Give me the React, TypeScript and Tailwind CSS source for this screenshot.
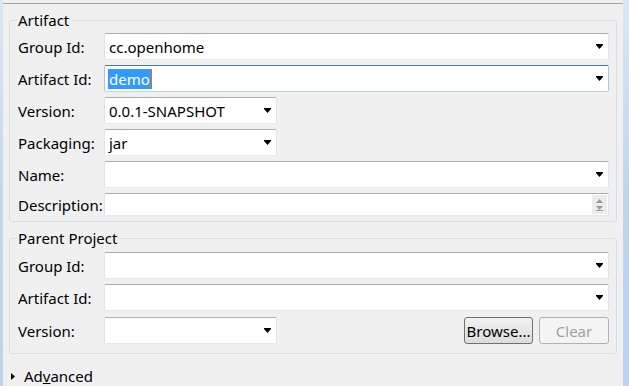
import React from 'react';

const FONT = "font-['Noto_Sans',sans-serif]";

function DropArrow() {
  return (
    <svg width="7" height="5" viewBox="0 0 7 5" className="shrink-0">
      <rect x="0" y="0" width="7" height="1" fill="#000" />
      <polygon points="0,1 7,1 3.5,5" fill="#000" />
    </svg>
  );
}

function SpinArrows() {
  return (
    <div className="flex h-[19px] w-[15px] flex-col items-center justify-center gap-[3px] bg-[#ececec]">
      <svg width="7" height="4" viewBox="0 0 7 4">
        <polygon points="3.5,0 7,4 0,4" fill="#9a9a9a" />
      </svg>
      <svg width="7" height="5" viewBox="0 0 7 5">
        <polygon points="0,0 7,0 3.5,4" fill="#9a9a9a" />
        <rect x="0" y="4" width="7" height="1" fill="#9a9a9a" />
      </svg>
    </div>
  );
}

type ComboProps = {
  value?: string;
  narrow?: boolean;
  focused?: boolean;
  selected?: boolean;
};

function Combo({ value = '', narrow, focused, selected }: ComboProps) {
  const border = focused
    ? 'border-t-[#3d7bad] border-x-[#a4c9e3] border-b-[#b7d9ed]'
    : 'border-t-[#abadb3] border-x-[#e2e3ea] border-b-[#e3e9ef]';
  return (
    <div
      className={`flex h-[27px] items-center rounded-[2px] border bg-white pl-[3px] ${border} ${
        narrow ? 'w-[173px] pr-[5px]' : 'flex-1 pr-[5px]'
      }`}
    >
      <div className="flex-1 truncate text-black">
        {selected ? (
          <span className="inline-flex items-center">
            <span className="bg-[#3399ff] px-[1px] text-white">{value}</span>
            <span className="h-[20px] w-[1px] bg-[#d0722a]" />
          </span>
        ) : (
          <span className="pl-[1px]">{value}</span>
        )}
      </div>
      <DropArrow />
    </div>
  );
}

function Row({ label, children, gap = 'mb-[5px]' }: { label: string; children: React.ReactNode; gap?: string }) {
  return (
    <div className={`flex items-center ${gap}`}>
      <div className="w-[87px] shrink-0 pl-[1px] text-black">{label}</div>
      {children}
    </div>
  );
}

export default function App() {
  return (
    <div className={`flex h-[386px] w-[629px] overflow-hidden bg-[#f0f0f0] text-[15px] leading-[20px] ${FONT}`}>
      {/* left window edge */}
      <div className="w-[3px] bg-gradient-to-b from-[#dbe7f5] via-[#c2d7ef] to-[#bcd3ee]" />

      <div className="flex flex-1 flex-col pt-[3px]">
        <div className="flex flex-1 flex-col border-t border-[#a4a4a4] px-[6px]">
          {/* Artifact */}
          <fieldset className="mt-[7px] min-w-0 rounded-[3px] border border-[#d5dfe5] px-[7px] pt-[4px] pb-[5px]">
            <legend className="px-[1px] leading-[18px] text-black">Artifact</legend>
            <Row label="Group Id:">
              <Combo value="cc.openhome" />
            </Row>
            <Row label="Artifact Id:">
              <Combo value="demo" focused selected />
            </Row>
            <Row label="Version:">
              <Combo value="0.0.1-SNAPSHOT" narrow />
            </Row>
            <Row label="Packaging:">
              <Combo value="jar" narrow />
            </Row>
            <Row label="Name:">
              <Combo />
            </Row>
            <Row label="Description:" gap="">
              <div className="flex h-[23px] flex-1 items-center justify-end rounded-[2px] border border-t-[#abadb3] border-x-[#e2e3ea] border-b-[#e3e9ef] bg-white pr-[1px]">
                <SpinArrows />
              </div>
            </Row>
          </fieldset>

          {/* Parent Project */}
          <fieldset className="mt-[7px] min-w-0 rounded-[3px] border border-[#d5dfe5] px-[7px] pt-[5px] pb-[9px]">
            <legend className="px-[1px] leading-[18px] text-black">Parent Project</legend>
            <Row label="Group Id:">
              <Combo />
            </Row>
            <Row label="Artifact Id:" gap="mb-[6px]">
              <Combo />
            </Row>
            <Row label="Version:" gap="">
              <Combo narrow />
              <div className="flex-1" />
              <button className="h-[27px] w-[69px] rounded-[3px] border border-[#707070] bg-gradient-to-b from-[#f2f2f2] to-[#dcdcdc] text-black">
                Browse...
              </button>
              <button
                disabled
                className="ml-[6px] h-[27px] w-[70px] rounded-[3px] border border-[#adb2b5] bg-[#f4f4f4] text-[#a0a0a0]"
              >
                Clear
              </button>
            </Row>
          </fieldset>

          {/* Advanced */}
          <div className="mt-[13px] flex h-[18px] items-center pl-[2px] text-black">
            <svg width="4" height="7" viewBox="0 0 4 7" className="shrink-0">
              <polygon points="0,0 4,3.5 0,7" fill="#000" />
            </svg>
            <span className="ml-[9px]">
              Ad<span className="underline">v</span>anced
            </span>
          </div>
        </div>
      </div>

      {/* right edge */}
      <div className="w-[6px] bg-gradient-to-b from-[#dbe7f5] via-[#bfd5ee] to-[#bcd3ee]" />
    </div>
  );
}
